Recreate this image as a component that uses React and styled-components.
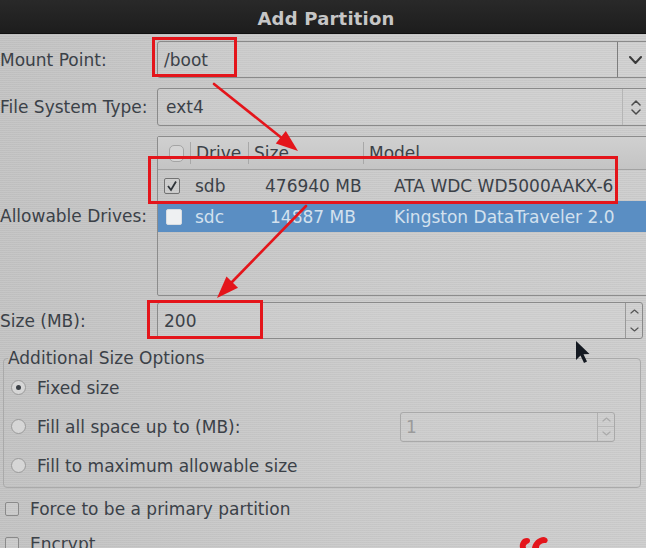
import React from 'react';
import styled, { createGlobalStyle } from 'styled-components';

const Global = createGlobalStyle`
  html, body { margin: 0; padding: 0; }
  body {
    width: 646px; height: 548px; overflow: hidden;
    background: #c8c8c8;
    font-family: "DejaVu Sans", "Noto Sans", sans-serif;
    font-size: 17px;
    color: #3b4148;
  }
`;

const Page = styled.div`
  position: relative;
  width: 646px;
  height: 548px;
  overflow: hidden;
  background-color: #c8c8c8;
  background-image:
    repeating-linear-gradient(0deg, rgba(255,255,255,0.06) 0 1px, rgba(0,0,0,0.025) 1px 2px),
    linear-gradient(90deg, #c3c3c3, #cbcbcb 60%, #cdcdcd);
`;

const TitleBar = styled.div`
  height: 34px;
  box-sizing: border-box;
  background: linear-gradient(#292929, #1d1d1d);
  border-bottom: 1px solid #101010;
  display: flex;
  align-items: center;
  justify-content: center;
  padding: 4px 0 0 6px;
  color: #c6c6c6;
  font-weight: bold;
  font-size: 18px;
  letter-spacing: 0.2px;
`;

const Form = styled.div`
  display: grid;
  grid-template-columns: 157px 1fr;
  align-items: center;
  row-gap: 10px;
  margin: 7px 0 0 0;
`;

const Label = styled.div`
  white-space: nowrap;
  line-height: 20px;
  margin-top: ${p => p.$mt || 0}px;
`;

const Field = styled.div`
  display: flex;
  align-items: stretch;
  height: ${p => p.$h || 37}px;
  margin-right: ${p => p.$mr ?? -12}px;
  margin-top: ${p => p.$mt || 0}px;
  border: 1px solid ${p => (p.$disabled ? '#a9a9a9' : '#8a8a8a')};
  border-radius: 3px;
  box-sizing: border-box;
  background: ${p => (p.$disabled ? 'rgba(255,255,255,0.04)' : 'rgba(255,255,255,0.07)')};
`;

const EntryText = styled.div`
  flex: 1;
  display: flex;
  align-items: center;
  padding-left: ${p => p.$pl || 6}px;
  color: ${p => (p.$disabled ? '#9a9a9a' : '#3b4148')};
`;

const DropButton = styled.div`
  width: ${p => p.$w}px;
  display: flex;
  flex-direction: column;
  align-items: flex-start;
  justify-content: center;
  gap: 3px;
  padding-left: ${p => p.$pl}px;
  box-sizing: border-box;
  border-left: 1px solid ${p => p.$line};
`;

const SpinButtons = styled.div`
  width: 16px;
  display: flex;
  flex-direction: column;
  border-left: 1px solid ${p => (p.$disabled ? '#b0b0b0' : '#999')};
`;

const SpinHalf = styled.div`
  flex: 1;
  display: flex;
  align-items: center;
  justify-content: center;
  & + & { border-top: 1px solid ${p => (p.$disabled ? '#b8b8b8' : '#a5a5a5')}; }
`;

const List = styled.div`
  height: 160px;
  margin-right: -12px;
  border: 1px solid #8c8c8c;
  border-radius: 2px;
  box-sizing: border-box;
  display: flex;
  flex-direction: column;
`;

const HeaderRow = styled.div`
  height: 32px;
  display: grid;
  grid-template-columns: 32px 58px 115px 1fr;
  background: linear-gradient(#d0d0d0, #c4c4c4);
  border-bottom: 1px solid #a2a2a2;
`;

const HeaderCell = styled.div`
  display: flex;
  align-items: center;
  padding-left: 5px;
  margin: 5px 0;
  border-left: ${p => (p.$first ? 'none' : '1px solid #a8a8a8')};
  line-height: 20px;
`;

const HeaderCheck = styled.div`
  width: 13px;
  height: 15px;
  margin-left: 6px;
  border: 1px solid #a4a4a4;
  border-radius: 5px;
  background: #d4d4d4;
`;

const DriveRow = styled.div`
  height: 31px;
  display: grid;
  grid-template-columns: 32px 70px 134px 1fr;
  align-items: center;
  background: ${p => (p.$selected ? '#5a8ec3' : 'transparent')};
  color: ${p => (p.$selected ? '#d3e1ee' : '#3b4148')};
  white-space: nowrap;
`;

const RowCell = styled.div`
  padding-left: ${p => p.$pl ?? 5}px;
  overflow: hidden;
`;

const Check = styled.div`
  width: 16px;
  height: 16px;
  margin-left: ${p => p.$ml ?? 6}px;
  box-sizing: border-box;
  border: 1px solid ${p => (p.$white ? '#d8dde2' : '#727272')};
  border-radius: 2px;
  background: ${p => (p.$white ? '#eef0f2' : 'rgba(255,255,255,0.12)')};
  display: flex;
  align-items: center;
  justify-content: center;
  flex: none;
`;

const Group = styled.fieldset`
  margin: 9px 5px 0 3px;
  padding: 0 25px 2px 8px;
  border: 1px solid #aaaaaa;
  border-radius: 4px;
  min-width: 0;
`;

const Legend = styled.legend`
  padding: 0;
  margin-left: -4px;
  line-height: 20px;
`;

const OptionRow = styled.div`
  height: 39px;
  display: flex;
  align-items: center;
  white-space: nowrap;
`;

const Radio = styled.div`
  width: 13px;
  height: 13px;
  border-radius: 50%;
  border: 1px solid #9a9a9a;
  background: #d6d6d6;
  margin-right: 11px;
  margin-left: -1px;
  display: flex;
  align-items: center;
  justify-content: center;
  flex: none;
  &::after {
    content: '';
    width: 5px;
    height: 5px;
    border-radius: 50%;
    background: ${p => (p.$on ? '#3a3f45' : 'transparent')};
  }
`;

const SmallSpin = styled(Field)`
  margin-left: auto;
  width: 215px;
`;

const CheckRow = styled.div`
  height: 35px;
  display: flex;
  align-items: center;
  gap: 11px;
  padding-left: 5px;
  margin-top: ${p => p.$mt || 0}px;
  white-space: nowrap;
`;

const Box = styled.div`
  width: 14px;
  height: 14px;
  box-sizing: border-box;
  border: 1px solid #8a8a8a;
  border-radius: 2px;
  background: rgba(255,255,255,0.12);
  flex: none;
`;

const Overlay = styled.svg`
  position: absolute;
  left: 0;
  top: 0;
  width: 646px;
  height: 548px;
  pointer-events: none;
`;

const Chevron = ({ up, w = 10, h = 6, color = '#444', sw = 1.6 }) => (
  <svg width={w} height={h} viewBox={`0 0 ${w} ${h}`}>
    <polyline
      points={up ? `1,${h - 1} ${w / 2},1 ${w - 1},${h - 1}` : `1,1 ${w / 2},${h - 1} ${w - 1},1`}
      fill="none"
      stroke={color}
      strokeWidth={sw}
      strokeLinecap="round"
      strokeLinejoin="round"
    />
  </svg>
);

const Tick = () => (
  <svg width="12" height="12" viewBox="0 0 12 12">
    <polyline points="2,6 5,10 10,1.5" fill="none" stroke="#2e3338" strokeWidth="1.8" />
  </svg>
);

const Spin = ({ disabled }) => (
  <SpinButtons $disabled={disabled}>
    <SpinHalf $disabled={disabled}><Chevron up w={9} h={5} color={disabled ? '#aaa' : '#555'} sw={1.2} /></SpinHalf>
    <SpinHalf $disabled={disabled}><Chevron w={9} h={5} color={disabled ? '#aaa' : '#555'} sw={1.2} /></SpinHalf>
  </SpinButtons>
);

const drives = [
  { name: 'sdb', size: '476940 MB', model: 'ATA WDC WD5000AAKX-6', checked: true },
  { name: 'sdc', size: '14887 MB', model: 'Kingston DataTraveler 2.0', selected: true },
];

const RED = '#e4151b';

export default function App() {
  return (
    <Page>
      <Global />
      <TitleBar>Add Partition</TitleBar>
      <Form>
        <Label>Mount Point:</Label>
        <Field $h={37}>
          <EntryText $pl={6}>/boot</EntryText>
          <DropButton $w={40} $pl={11} $line="#7d7d7d">
            <Chevron w={13} h={8} color="#3a3a3a" sw={2} />
          </DropButton>
        </Field>

        <Label>File System Type:</Label>
        <Field $h={38}>
          <EntryText $pl={8}>ext4</EntryText>
          <DropButton $w={35} $pl={8} $line="#b5b5b5">
            <Chevron up w={10} h={6} color="#4a4a4a" sw={1.5} />
            <Chevron w={10} h={6} color="#4a4a4a" sw={1.5} />
          </DropButton>
        </Field>

        <Label>Allowable Drives:</Label>
        <List>
          <HeaderRow>
            <HeaderCell $first><HeaderCheck /></HeaderCell>
            <HeaderCell>Drive</HeaderCell>
            <HeaderCell>Size</HeaderCell>
            <HeaderCell>Model</HeaderCell>
          </HeaderRow>
          {drives.map(d => (
            <DriveRow key={d.name} $selected={d.selected}>
              <RowCell $pl={0}>
                <Check $white={d.selected} $ml={d.selected ? 8 : 6}>{d.checked && <Tick />}</Check>
              </RowCell>
              <RowCell>{d.name}</RowCell>
              <RowCell $pl={d.selected ? 10 : 5}>{d.size}</RowCell>
              <RowCell $pl={0}>{d.model}</RowCell>
            </DriveRow>
          ))}
        </List>

        <Label $mt={-4}>Size (MB):</Label>
        <Field $h={37} $mr={3} $mt={-4}>
          <EntryText $pl={6}>200</EntryText>
          <Spin />
        </Field>
      </Form>

      <Group>
        <Legend>Additional Size Options</Legend>
        <OptionRow><Radio $on />Fixed size</OptionRow>
        <OptionRow>
          <Radio />Fill all space up to (MB):
          <SmallSpin $h={30} $mr={0} $disabled>
            <EntryText $pl={5} $disabled>1</EntryText>
            <Spin disabled />
          </SmallSpin>
        </OptionRow>
        <OptionRow><Radio />Fill to maximum allowable size</OptionRow>
      </Group>

      <CheckRow $mt={3}><Box />Force to be a primary partition</CheckRow>
      <CheckRow><Box />Encrypt</CheckRow>

      <Overlay viewBox="0 0 646 548">
        <g fill="none" stroke={RED} strokeWidth="3">
          <rect x="153.5" y="38.5" width="82" height="37" />
          <rect x="149.5" y="157.5" width="467" height="45" />
          <rect x="148.5" y="301.5" width="113" height="36" />
        </g>
        <g stroke={RED} strokeWidth="2.6" strokeLinecap="round">
          <line x1="214" y1="84" x2="283" y2="139" />
          <line x1="306" y1="206" x2="232" y2="282" />
        </g>
        <g fill={RED}>
          <polygon points="298,151 275.8,143.6 285.8,131" />
          <polygon points="217,298 226.5,276.6 238,287.8" />
          <path d="M520 548 C519 543 522 538 527 538 C530 538 531 541 529 543 C526 544 525 546 526 548 Z" />
          <path d="M532 548 C533 542 538 537 544 537 C548 538 549 541 546 543 C541 543 539 545 539 548 Z" />
        </g>
        <path d="M576 341 L576 360 L580.5 355.5 L584 363 L587 361.6 L583.5 354.3 L589.5 354 Z" fill="#151a22" />
      </Overlay>
    </Page>
  );
}
